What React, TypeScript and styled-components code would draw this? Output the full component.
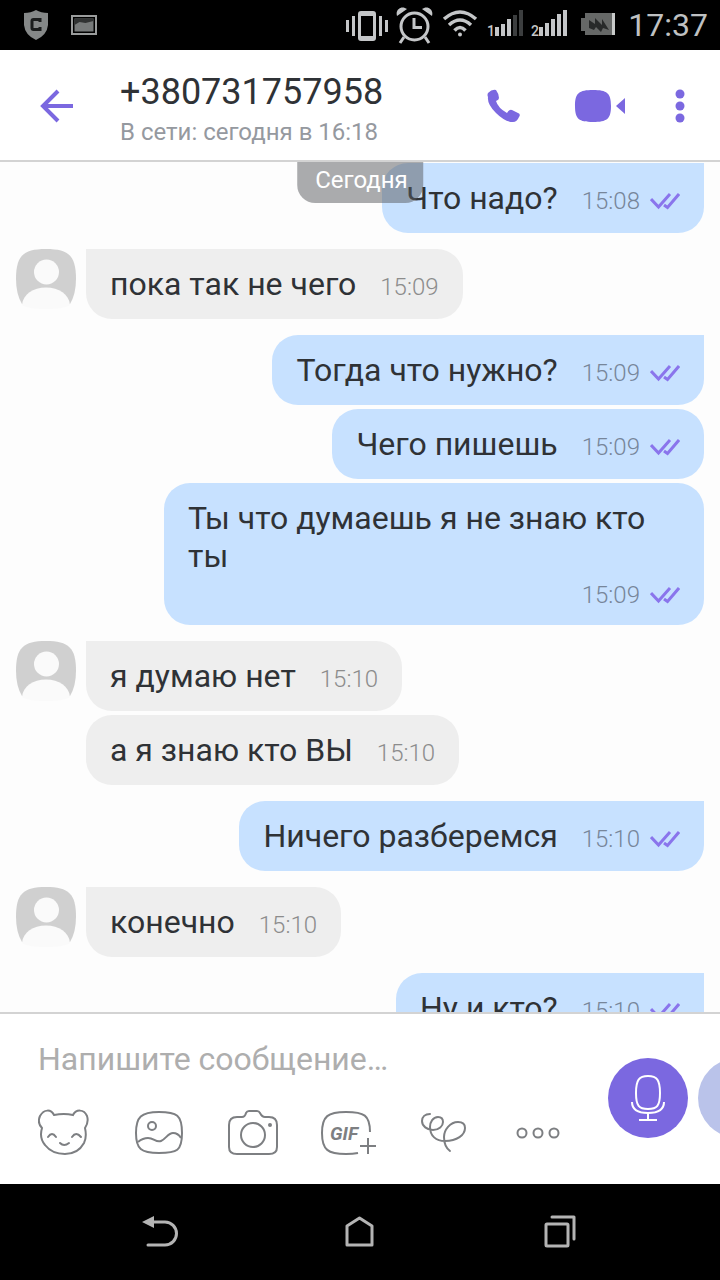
import React from "react";
import styled, { createGlobalStyle, css } from "styled-components";

const purple = "#7b68e0";
const ink = "#2f3236";

const GlobalStyle = createGlobalStyle`
  *, *::before, *::after { box-sizing: border-box; }
  html, body { margin: 0; padding: 0; background: #fdfdfd; }
  body { font-family: Roboto, "Liberation Sans", sans-serif; color: ${ink}; }
  button, input { font: inherit; color: inherit; }
`;

const Screen = styled.div`
  display: flex;
  flex-direction: column;
  width: 100%;
  height: 100vh;
  overflow: hidden;
`;

const StatusBar = styled.div`
  display: flex;
  flex: none;
  align-items: center;
  justify-content: space-between;
  height: 50px;
  padding: 0 12px 0 24px;
  background: #000;
  color: #c4c6c8;
`;

const StatusGroup = styled.div<{ $gap: number }>`
  display: flex;
  align-items: center;
  gap: ${(p) => p.$gap}px;
`;

const Clock = styled.time`
  font-size: 32px;
  line-height: 50px;
  color: #bfc1c2;
  padding-left: 4px;
`;

const Header = styled.header`
  display: flex;
  flex: none;
  align-items: center;
  padding: 2px 16px 0 32px;
  height: 112px;
  background: #fff;
  border-bottom: 2px solid #d3d3d3;
  color: ${purple};
`;

const IconButton = styled.button`
  display: flex;
  flex: none;
  align-items: center;
  justify-content: center;
  padding: 0;
  border: 0;
  background: none;
  color: inherit;
  cursor: pointer;
`;

const Contact = styled.div`
  flex: 1;
  min-width: 0;
  padding: 7px 0 0 40px;
`;

const ContactName = styled.h1`
  margin: 0;
  font-size: 36px;
  line-height: 42px;
  font-weight: 400;
  color: ${ink};
`;

const ContactStatus = styled.p`
  margin: 0;
  padding-top: 3px;
  font-size: 24px;
  line-height: 32px;
  color: #95999f;
`;

const HeaderActions = styled.div`
  display: flex;
  align-items: center;
  gap: 24px;
`;

const Chat = styled.main`
  position: relative;
  display: flex;
  flex-direction: column;
  flex: 1;
  min-height: 0;
  gap: 16px;
  padding: 1px 16px 0;
  overflow: hidden;
  background: #fdfdfd;
`;

const DayBadge = styled.div`
  position: absolute;
  z-index: 1;
  top: 0;
  left: 50%;
  transform: translateX(-50%);
  padding: 2px 15px 7px 18px;
  border-radius: 0 0 18px 18px;
  background: rgba(88, 90, 94, 0.5);
  color: #fff;
  font-size: 24px;
  line-height: 32px;
`;

const Group = styled.section<{ $mine?: boolean }>`
  display: flex;
  flex: none;
  gap: 10px;
  justify-content: ${(p) => (p.$mine ? "flex-end" : "flex-start")};
`;

const Stack = styled.div<{ $mine?: boolean }>`
  display: flex;
  flex-direction: column;
  gap: 4px;
  align-items: ${(p) => (p.$mine ? "flex-end" : "flex-start")};
`;

const Bubble = styled.article<{ $mine?: boolean; $long?: boolean; $first?: boolean }>`
  display: flex;
  gap: 4px 24px;
  align-items: flex-end;
  padding: 16px 24px;
  font-size: 32px;
  line-height: 38px;
  background: #eeeeee;
  border-radius: ${(p) => (p.$first ? "0" : "26px")} 26px 26px 26px;
  ${(p) =>
    p.$mine &&
    css`
      background: #c7e1ff;
      border-radius: 26px ${p.$first ? "0" : "26px"} 26px 26px;
    `}
  ${(p) =>
    p.$long &&
    css`
      flex-direction: column;
      max-width: 540px;
      padding-bottom: 14px;
    `}
`;

const MessageText = styled.p`
  margin: 0;
`;

const Meta = styled.div<{ $mine?: boolean }>`
  display: flex;
  align-items: center;
  gap: 10px;
  font-size: 24px;
  line-height: 32px;
  font-weight: 300;
  color: ${(p) => (p.$mine ? "#77869a" : "#8c8c8c")};
`;

const Composer = styled.form`
  display: flex;
  flex: none;
  align-items: flex-start;
  height: 172px;
  padding-left: 38px;
  background: #fff;
  border-top: 2px solid #d3d3d3;
  overflow: hidden;
`;

const ComposerMain = styled.div`
  flex: 1;
  min-width: 0;
  padding-top: 23px;
`;

const MessageInput = styled.input`
  display: block;
  width: 100%;
  height: 44px;
  padding: 0;
  border: 0;
  outline: 0;
  background: none;
  font-size: 32px;
  line-height: 44px;
  &::placeholder { color: #aeaeae; opacity: 1; }
`;

const Tools = styled.div`
  display: flex;
  align-items: center;
  gap: 42px;
  padding-top: 25px;
  color: #7d7f82;
`;

const VoiceActions = styled.div`
  display: flex;
  flex: none;
  gap: 10px;
  width: 112px;
  padding-top: 44px;
  overflow: hidden;
`;

const RoundButton = styled(IconButton)<{ $pale?: boolean }>`
  width: 80px;
  height: 80px;
  border-radius: 50%;
  color: #fff;
  background: ${(p) => (p.$pale ? "#bac3ea" : purple)};
`;

const NavBar = styled.nav`
  display: flex;
  flex: none;
  align-items: center;
  justify-content: center;
  gap: 140px;
  height: 96px;
  padding-top: 2px;
  background: #000;
  color: #b4b4b4;
`;

const NavButton = styled(IconButton)`
  width: 60px;
  height: 60px;
`;

const AvatarSvg = styled.svg`
  flex: none;
  display: block;
`;

const GifLabel = styled.text`
  font: italic 700 19px Roboto, sans-serif;
`;

const SimLabel = styled.text`
  font: 500 14px Roboto, sans-serif;
`;

const Avatar = () => (
  <AvatarSvg width="60" height="60" viewBox="0 0 60 60" role="img" aria-label="Контакт">
    <path d="M30 0C53 0 60 7 60 30Q60 45 54 55H6Q0 45 0 30C0 7 7 0 30 0Z" fill="#d0d0d0" />
    <circle cx="30.500" cy="23" r="12.500" fill="#fafafa" />
    <path d="M6 56C7 45 17 38.500 30 38.500S53 45 54 56C49 59 42 60 30 60S11 59 6 56Z" fill="#fafafa" />
  </AvatarSvg>
);

const Ticks = () => (
  <svg width="30" height="20" viewBox="0 0 30 20" fill="none" stroke="#8a75ec" strokeWidth="3" aria-label="Прочитано">
    <path d="M1 8 8.500 16 20 3M14 14 17.500 16.500 29 3" />
  </svg>
);

type Message = { text: string; time: string; long?: boolean };
type MessageGroup = { mine: boolean; items: Message[] };

const groups: MessageGroup[] = [
  { mine: true, items: [{ text: "Что надо?", time: "15:08" }] },
  { mine: false, items: [{ text: "пока так не чего", time: "15:09" }] },
  {
    mine: true,
    items: [
      { text: "Тогда что нужно?", time: "15:09" },
      { text: "Чего пишешь", time: "15:09" },
      { text: "Ты что думаешь я не знаю кто ты", time: "15:09", long: true },
    ],
  },
  {
    mine: false,
    items: [
      { text: "я думаю нет", time: "15:10" },
      { text: "а я знаю кто ВЫ", time: "15:10" },
    ],
  },
  { mine: true, items: [{ text: "Ничего разберемся", time: "15:10" }] },
  { mine: false, items: [{ text: "конечно", time: "15:10" }] },
  { mine: true, items: [{ text: "Ну и кто?", time: "15:10" }] },
];

const StatusIcons = () => (
  <StatusGroup $gap={8}>
    <svg width="42" height="34" viewBox="0 0 42 34" fill="#c4c6c8">
      <path d="M0 12h3v12H0zM6 8h3v20H6zM33 8h3v20h-3zM39 12h3v12h-3z" />
      <path fillRule="evenodd" d="M15 3h12q3 0 3 3v24q0 3-3 3H15q-3 0-3-3V6q0-3 3-3Zm0 5v20h12V8Z" />
    </svg>
    <svg width="37" height="38" viewBox="0 0 37 38" fill="none" stroke="#c4c6c8" strokeWidth="3">
      <circle cx="18.500" cy="20.500" r="13.500" />
      <path d="M18 12v9.500h8M8 31l-4 6M29 31l4 6" />
      <path d="M1 10C-1 3 6-1 11 3ZM36 10C38 3 31-1 26 3Z" fill="#c4c6c8" stroke="none" />
    </svg>
    <svg width="38" height="30" viewBox="0 0 38 30" fill="none" stroke="#c4c6c8" strokeWidth="3.500">
      <path d="M3 9Q19-5 35 9M8 15Q19 5 30 15M13.500 20.500Q19 14.500 24.500 20.500" />
      <circle cx="19" cy="24.500" r="2" fill="#c4c6c8" stroke="none" />
    </svg>
    <svg width="36" height="34" viewBox="0 -1 36 34" fill="#c4c6c8">
      <SimLabel x="0" y="27">1</SimLabel>
      <path d="M8 18h4v9H8zM14 15h4v12h-4zM20 10h4v17h-4z" />
      <path d="M26 6h4v21h-4zM32 1h4v26h-4z" fill="#3c3e3f" />
    </svg>
    <svg width="37" height="34" viewBox="0 -1 37 34" fill="#c4c6c8">
      <SimLabel x="0" y="27">2</SimLabel>
      <path d="M8 18h4v9H8zM14 14h4v13h-4zM20 10h4v17h-4zM26 5h4v22h-4zM32 1h4v26h-4z" />
    </svg>
    <svg width="40" height="26" viewBox="2 0 40 26">
      <path d="M11 1h27v22H11v-4H7V6h4Z" fill="#666867" />
      <path d="M38 1h3v22h-3z" fill="#c9cbca" />
      <path d="M15 8 21 12V6l7 7V7l7 11-6-2-2 4-5-5-2 3-5-2Z" fill="#282a2a" />
    </svg>
    <Clock>17:37</Clock>
  </StatusGroup>
);

export default function App() {
  return (
    <Screen>
      <GlobalStyle />
      <StatusBar>
        <StatusGroup $gap={23}>
          <svg width="24" height="32" viewBox="0 0 24 32">
            <path d="M12 1Q17 4 24 4V16Q23 26 12 31 1 26 0 16V4Q7 4 12 1Z" fill="#858888" />
            <path d="M16 13V10.500H9.500Q8 10.500 8 12v7q0 1.500 1.500 1.500H16V18" fill="none" stroke="#1b1d1d" strokeWidth="3" />
          </svg>
          <svg width="26" height="20" viewBox="0 0 26 20">
            <path d="M1 1h24v18H1z" fill="#000" stroke="#9a9c9c" strokeWidth="2" />
            <path d="M3.500 3.500h19v13h-19z" fill="#777a7a" />
            <path d="M3.500 3.500h19V6l-8 2-6-1-5 3z" fill="#303232" />
          </svg>
        </StatusGroup>
        <StatusIcons />
      </StatusBar>

      <Header>
        <IconButton aria-label="Назад">
          <svg width="48" height="48" viewBox="0 0 48 48" fill="none" stroke="currentColor" strokeWidth="4">
            <path d="M41 24H11M26 9 11 24 26 39" />
          </svg>
        </IconButton>
        <Contact>
          <ContactName>+380731757958</ContactName>
          <ContactStatus>В сети: сегодня в 16:18</ContactStatus>
        </Contact>
        <HeaderActions>
          <IconButton aria-label="Позвонить">
            <svg width="64" height="48" viewBox="0 0 64 48" fill="currentColor">
              <path d="M8 11Q12 7 16 8Q19 12 19 16Q19 18 16 19Q18 26 27 31Q29 27 32 28L38 31Q41 32 39 35Q37 40 33 40Q25 40 16 31T8 15Q7 13 8 11Z" />
            </svg>
          </IconButton>
          <IconButton aria-label="Видеозвонок">
            <svg width="64" height="48" viewBox="-7 0 64 48" fill="currentColor">
              <path d="M18 8C32 8 36 11 36 24S32 40 18 40 0 37 0 24 4 8 18 8ZM50 16V32L41 24Z" />
            </svg>
          </IconButton>
          <IconButton aria-label="Ещё">
            <svg width="48" height="48" viewBox="0 0 48 48" fill="currentColor">
              <circle cx="24" cy="12" r="4.500" />
              <circle cx="24" cy="24" r="4.500" />
              <circle cx="24" cy="36" r="4.500" />
            </svg>
          </IconButton>
        </HeaderActions>
      </Header>

      <Chat>
        <DayBadge>Сегодня</DayBadge>
        {groups.map((group, g) => (
          <Group key={g} $mine={group.mine}>
            {!group.mine && <Avatar />}
            <Stack $mine={group.mine}>
              {group.items.map((m, i) => (
                <Bubble key={i} $mine={group.mine} $long={m.long} $first={i === 0}>
                  <MessageText>{m.text}</MessageText>
                  <Meta $mine={group.mine}>
                    <time>{m.time}</time>
                    {group.mine && <Ticks />}
                  </Meta>
                </Bubble>
              ))}
            </Stack>
          </Group>
        ))}
      </Chat>

      <Composer onSubmit={(e) => e.preventDefault()}>
        <ComposerMain>
          <MessageInput type="text" aria-label="Сообщение" placeholder="Напишите сообщение…" />
          <Tools>
            <IconButton type="button" aria-label="Стикеры">
              <svg width="54" height="52" viewBox="0 0 54 52" fill="none" stroke="currentColor" strokeWidth="2" strokeLinecap="round">
                <path d="M16 9Q26 7 35 9C38 3 46 3 49 10Q51 16 47 22Q49 31 46 37Q40 48 27 48T7 39Q1 32 4 22Q-1 17 2 10C6 3 13 3 16 9" />
                <path d="M10 31Q14 25 18 31M34 31Q38 25 43 31M22 37Q26 41 31 37" />
              </svg>
            </IconButton>
            <IconButton type="button" aria-label="Галерея">
              <svg width="52" height="52" viewBox="0 0 52 52" fill="none" stroke="currentColor" strokeWidth="2">
                <path d="M25 6C43 6 48 9 48 27S43 47 25 47 2 43 2 27 7 6 25 6Z" />
                <circle cx="18" cy="20" r="4" />
                <path d="M4 36Q9 32 14 32C20 32 22 37 27 35S34 27 39 27Q44 27 47 32" />
              </svg>
            </IconButton>
            <IconButton type="button" aria-label="Камера">
              <svg width="50" height="52" viewBox="0 0 50 52" fill="none" stroke="currentColor" strokeWidth="2">
                <path d="M9 11H14Q17 11 18 7Q19 5 21 5H29Q31 5 32 7Q34 11 37 11H41Q49 11 49 19V41Q49 48 41 48H9Q1 48 1 41V19Q1 11 9 11Z" />
                <circle cx="25" cy="29" r="12" />
                <circle cx="42" cy="19" r="2" fill="currentColor" stroke="none" />
              </svg>
            </IconButton>
            <IconButton type="button" aria-label="GIF">
              <svg width="56" height="52" viewBox="0 0 56 52" fill="none" stroke="currentColor" strokeWidth="2">
                <path d="M38 47Q33 48 26 48C8 48 2 44 2 27S8 6 26 6 50 9 50 26M48 32V48M40 40H56" />
                <GifLabel x="10" y="34" fill="currentColor" stroke="none">GIF</GifLabel>
              </svg>
            </IconButton>
            <IconButton type="button" aria-label="Рисунок">
              <svg width="50" height="52" viewBox="-3 0 50 52" fill="none" stroke="currentColor" strokeWidth="2" strokeLinecap="round">
                <path d="M9 8C4 8 1 11 1 15C1 20 6 24 12 24C18 24 22 20 22 16C22 13 20 11 17 11C12 11 9 16 9 21C9 30 15 35 24 35C36 35 44 29 44 22C44 18 41 16 37 16C29 16 23 24 23 31C23 38 25 42 29 45" />
              </svg>
            </IconButton>
            <IconButton type="button" aria-label="Другое">
              <svg width="50" height="52" viewBox="-5 0 50 52" fill="none" stroke="currentColor" strokeWidth="2">
                <circle cx="7" cy="27" r="4.500" />
                <circle cx="23" cy="27" r="4.500" />
                <circle cx="39" cy="27" r="4.500" />
              </svg>
            </IconButton>
          </Tools>
        </ComposerMain>
        <VoiceActions>
          <RoundButton type="button" aria-label="Голосовое сообщение">
            <svg width="40" height="52" viewBox="0 0 40 52" fill="none" stroke="currentColor" strokeWidth="2">
              <path d="M20 4C29 4 32 8 32 21S29 37 20 37 8 34 8 21 11 4 20 4Z" />
              <path d="M4 30C4 38 10 41 20 41S36 38 36 30M20 41V48M11 48H29" />
            </svg>
          </RoundButton>
          <RoundButton type="button" $pale aria-label="Видеосообщение" />
        </VoiceActions>
      </Composer>

      <NavBar>
        <NavButton aria-label="Назад">
          <svg width="60" height="60" viewBox="0 0 60 60" fill="none" stroke="currentColor" strokeWidth="3" strokeLinecap="round">
            <path d="M22 19H35A11.500 11.500 0 0 1 35 42H18" />
            <path d="M12 19 24 13V25Z" fill="currentColor" stroke="none" />
          </svg>
        </NavButton>
        <NavButton aria-label="Домой">
          <svg width="60" height="60" viewBox="0 0 60 60" fill="none" stroke="currentColor" strokeWidth="3" strokeLinejoin="round">
            <path d="M17 23 29.500 15 42 23V42H17Z" />
          </svg>
        </NavButton>
        <NavButton aria-label="Недавние приложения">
          <svg width="60" height="60" viewBox="0 0 60 60" fill="none" stroke="currentColor" strokeWidth="3" strokeLinecap="round" strokeLinejoin="round">
            <rect x="16" y="21" width="22" height="22" rx="1" />
            <path d="M22 14H44V36" />
          </svg>
        </NavButton>
      </NavBar>
    </Screen>
  );
}
